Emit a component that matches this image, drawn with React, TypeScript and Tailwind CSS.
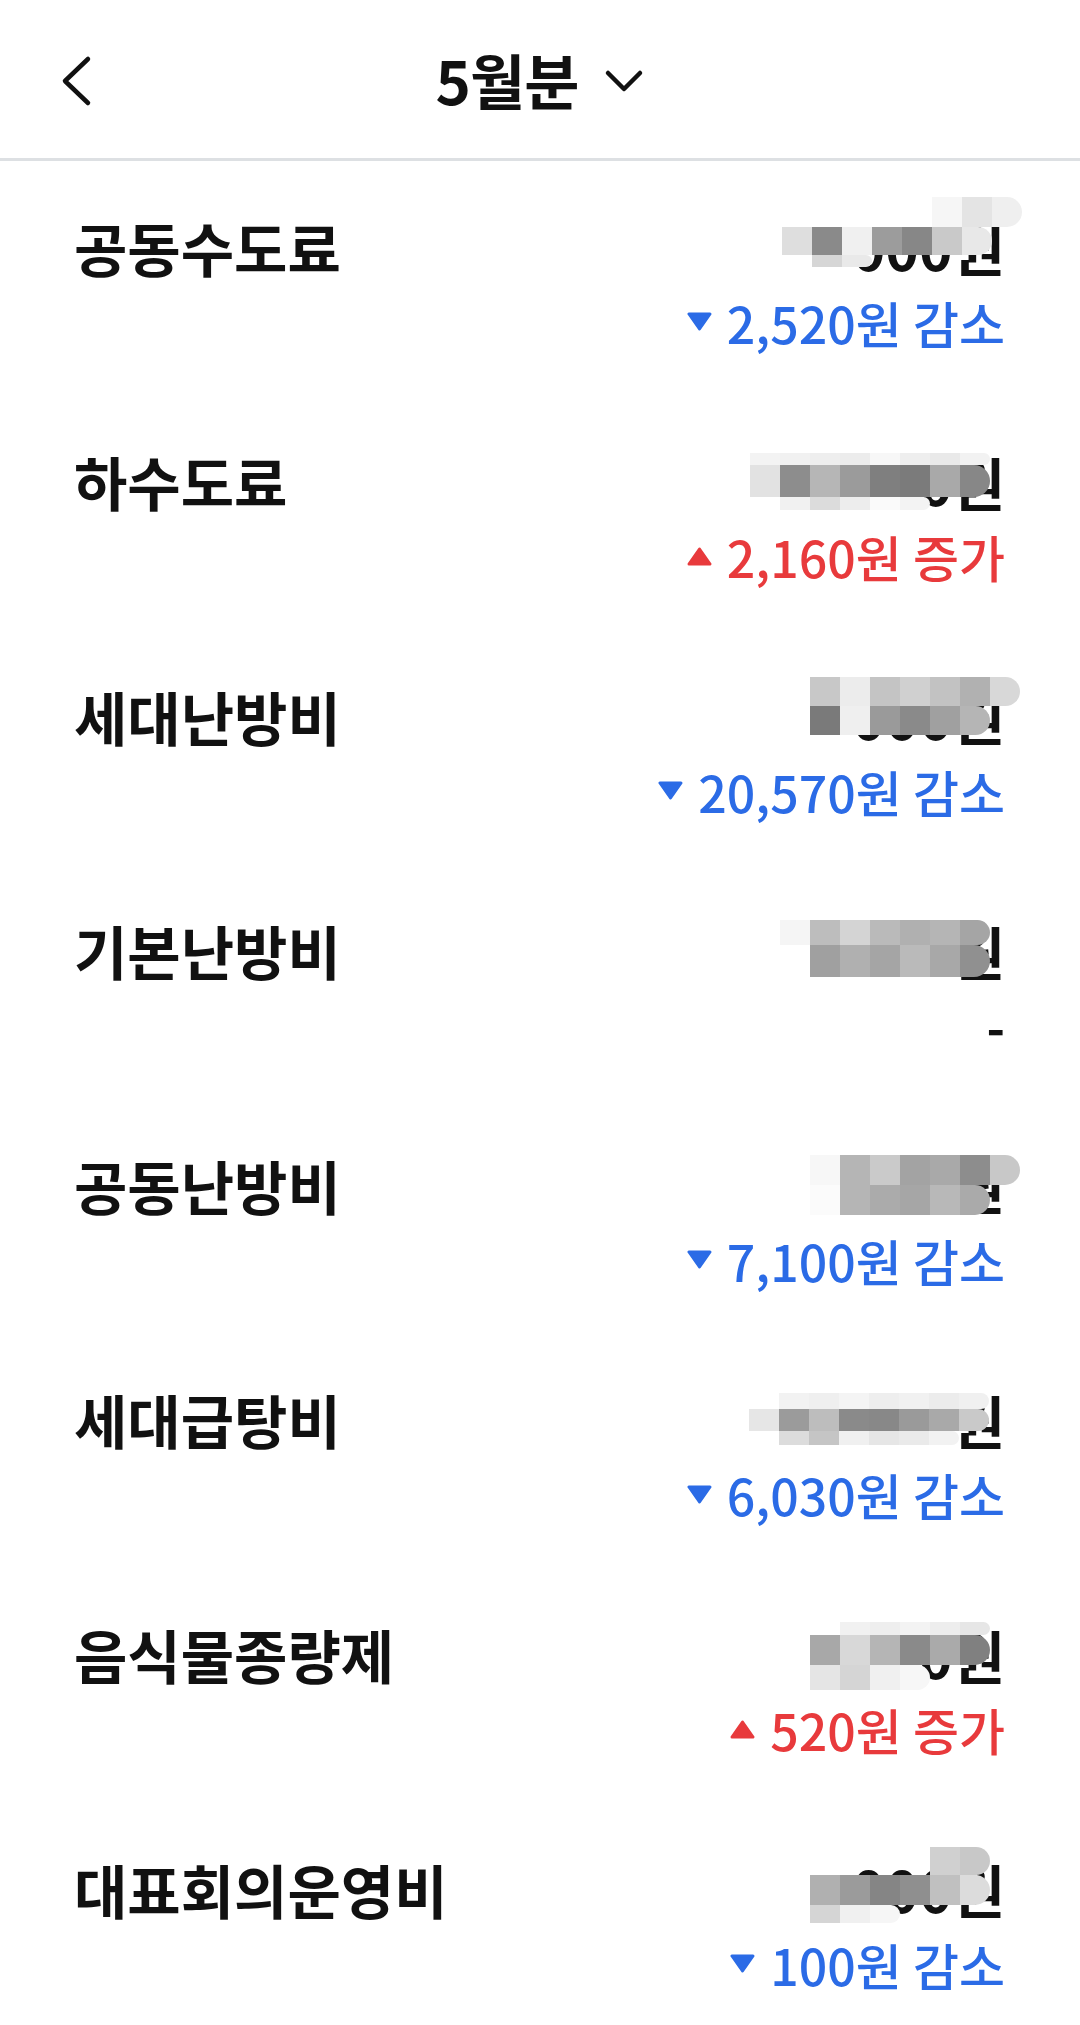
import React from 'react';

type MosaicRow = { h: number; offset?: number; cells: string[] };

type Item = {
  label: string;
  amount: string;
  change: null | { dir: 'up' | 'down'; text: string };
  mosaic: { left: number; top: number; rows: MosaicRow[] };
};

const items: Item[] = [
  {
    label: '공동수도료',
    amount: '000원',
    change: { dir: 'down', text: '2,520원 감소' },
    mosaic: {
      left: 782,
      top: 36,
      rows: [
        { h: 30, offset: 5, cells: ['#f6f6f6', '#e4e4e4', '#efefef'] },
        { h: 28, cells: ['#dedede', '#8a8a8a', '#f0f0f0', '#9c9c9c', '#878787', '#c9c9c9', '#e8e8e8'] },
        { h: 12, offset: 1, cells: ['#d6d6d6', '#e9e9e9'] },
      ],
    },
  },
  {
    label: '하수도료',
    amount: '000원',
    change: { dir: 'up', text: '2,160원 증가' },
    mosaic: {
      left: 750,
      top: 57,
      rows: [
        { h: 12, cells: ['#f3f3f3', '#f1f1f1', '#eeeeee', '#ececec', '#f7f7f7', '#eeeeee', '#e9e9e9', '#f2f2f2'] },
        { h: 32, cells: ['#e2e2e2', '#8d8d8d', '#b6b6b6', '#9b9b9b', '#7f7f7f', '#7b7b7b', '#a9a9a9', '#878787'] },
        { h: 13, offset: 1, cells: ['#f1f1f1', '#dcdcdc', '#ededed', '#fafafa', '#f3f3f3'] },
      ],
    },
  },
  {
    label: '세대난방비',
    amount: '000원',
    change: { dir: 'down', text: '20,570원 감소' },
    mosaic: {
      left: 810,
      top: 47,
      rows: [
        { h: 29, cells: ['#c8c8c8', '#ececec', '#c4c4c4', '#d0d0d0', '#c2c2c2', '#b1b1b1', '#d8d8d8'] },
        { h: 29, cells: ['#7a7a7a', '#efefef', '#9a9a9a', '#8a8a8a', '#a0a0a0', '#b5b5b5'] },
      ],
    },
  },
  {
    label: '기본난방비',
    amount: '000원',
    change: null,
    mosaic: {
      left: 780,
      top: 55,
      rows: [
        { h: 25, cells: ['#f5f5f5', '#bdbdbd', '#d4d4d4', '#bababa', '#b0b0b0', '#b5b5b5', '#a5a5a5'] },
        { h: 32, offset: 1, cells: ['#a0a0a0', '#b0b0b0', '#a5a5a5', '#bababa', '#a8a8a8', '#909090'] },
      ],
    },
  },
  {
    label: '공동난방비',
    amount: '000원',
    change: { dir: 'down', text: '7,100원 감소' },
    mosaic: {
      left: 810,
      top: 56,
      rows: [
        { h: 30, cells: ['#f7f7f7', '#b5b5b5', '#cacaca', '#a3a3a3', '#a9a9a9', '#8d8d8d', '#c8c8c8'] },
        { h: 30, cells: ['#fbfbfb', '#b5b5b5', '#ababab', '#a6a6a6', '#b8b8b8', '#aaaaaa'] },
      ],
    },
  },
  {
    label: '세대급탕비',
    amount: '000원',
    change: { dir: 'down', text: '6,030원 감소' },
    mosaic: {
      left: 749,
      top: 59,
      rows: [
        { h: 16, offset: 1, cells: ['#f2f2f2', '#efefef', '#f4f4f4', '#eeeeee', '#f1f1f1', '#ececec', '#f0f0f0'] },
        { h: 22, cells: ['#e6e6e6', '#9b9b9b', '#bdbdbd', '#8a8a8a', '#888888', '#9a9a9a', '#a9a9a9', '#c9c9c9'] },
        { h: 14, offset: 1, cells: ['#dcdcdc', '#c5c5c5', '#f0f0f0', '#e6e6e6', '#eaeaea', '#f2f2f2'] },
      ],
    },
  },
  {
    label: '음식물종량제',
    amount: '000원',
    change: { dir: 'up', text: '520원 증가' },
    mosaic: {
      left: 810,
      top: 53,
      rows: [
        { h: 13, offset: 1, cells: ['#f1f1f1', '#eeeeee', '#f3f3f3', '#ededed', '#e6e6e6'] },
        { h: 30, cells: ['#a8a8a8', '#d8d8d8', '#b5b5b5', '#8a8a8a', '#aaaaaa', '#808080'] },
        { h: 25, cells: ['#e5e5e5', '#d5d5d5', '#f0f0f0', '#f7f7f7'] },
      ],
    },
  },
  {
    label: '대표회의운영비',
    amount: '000원',
    change: { dir: 'down', text: '100원 감소' },
    mosaic: {
      left: 810,
      top: 44,
      rows: [
        { h: 28, offset: 4, cells: ['#d0d0d0', '#c8c8c8'] },
        { h: 30, cells: ['#b0b0b0', '#9b9b9b', '#858585', '#8f8f8f', '#c0c0c0', '#dcdcdc'] },
        { h: 18, cells: ['#d5d5d5', '#f0f0f0', '#f6f6f6'] },
      ],
    },
  },
];

function Mosaic({ left, top, rows }: Item['mosaic']) {
  return (
    <div className="absolute flex flex-col" style={{ left, top }}>
      {rows.map((row, i) => (
        <div key={i} className="flex" style={{ height: row.h, marginLeft: (row.offset ?? 0) * 30 }}>
          {row.cells.map((c, j) => (
            <div
              key={j}
              className={j === row.cells.length - 1 ? 'w-[30px] h-full rounded-r-full' : 'w-[30px] h-full'}
              style={{ backgroundColor: c }}
            />
          ))}
        </div>
      ))}
    </div>
  );
}

function Triangle({ dir }: { dir: 'up' | 'down' }) {
  return dir === 'down' ? (
    <svg width="25" height="19" viewBox="0 0 25 19" className="text-[#2b6be6]">
      <path d="M2 2 H23 L12.5 17 Z" fill="currentColor" stroke="currentColor" strokeWidth="3" strokeLinejoin="round" />
    </svg>
  ) : (
    <svg width="25" height="19" viewBox="0 0 25 19" className="text-[#e83a3c]">
      <path d="M12.5 2 L23 17 H2 Z" fill="currentColor" stroke="currentColor" strokeWidth="3" strokeLinejoin="round" />
    </svg>
  );
}

export default function App() {
  return (
    <div
      className="w-[1080px] min-h-[2025px] bg-white text-[#111111] overflow-hidden"
      style={{ fontFamily: '"Noto Sans CJK KR", "Noto Sans", sans-serif' }}
    >
      {/* Header */}
      <div className="relative h-[161px] border-b-[3px] border-[#dde0e3] flex items-center justify-center">
        <button className="absolute left-[56px] top-[52px] w-[44px] h-[58px] flex items-center justify-center">
          <svg width="40" height="56" viewBox="0 0 40 56" fill="none">
            <path d="M30 6 L7 28 L30 50" stroke="#111" strokeWidth="4.5" strokeLinecap="round" strokeLinejoin="round" />
          </svg>
        </button>
        <div className="flex items-center gap-[26px]">
          <span className="text-[60px] font-bold leading-none tracking-[-1px]">5월분</span>
          <svg width="40" height="26" viewBox="0 0 40 26" fill="none" className="mt-[4px]">
            <path d="M4 5 L20 21 L36 5" stroke="#111" strokeWidth="4.5" strokeLinecap="round" strokeLinejoin="round" />
          </svg>
        </div>
      </div>

      {/* Rows */}
      <div className="flex flex-col">
        {items.map((item) => (
          <div key={item.label} className="relative h-[234.6px] pt-[48px] pl-[74px] pr-[75px]">
            <div className="h-[75px] flex items-center justify-between">
              <span className="text-[58px] font-semibold leading-none">{item.label}</span>
              <span className="text-[57px] font-bold leading-none">{item.amount}</span>
            </div>
            <div className="h-[75px] flex items-center justify-end">
              {item.change ? (
                <div className="flex items-center gap-[15px]">
                  <Triangle dir={item.change.dir} />
                  <span
                    className={
                      item.change.dir === 'down'
                        ? 'text-[50px] font-medium leading-none text-[#2b6be6]'
                        : 'text-[50px] font-medium leading-none text-[#e83a3c]'
                    }
                  >
                    {item.change.text}
                  </span>
                </div>
              ) : (
                <span className="text-[50px] font-bold leading-none">-</span>
              )}
            </div>
            <Mosaic {...item.mosaic} />
          </div>
        ))}
      </div>
    </div>
  );
}
